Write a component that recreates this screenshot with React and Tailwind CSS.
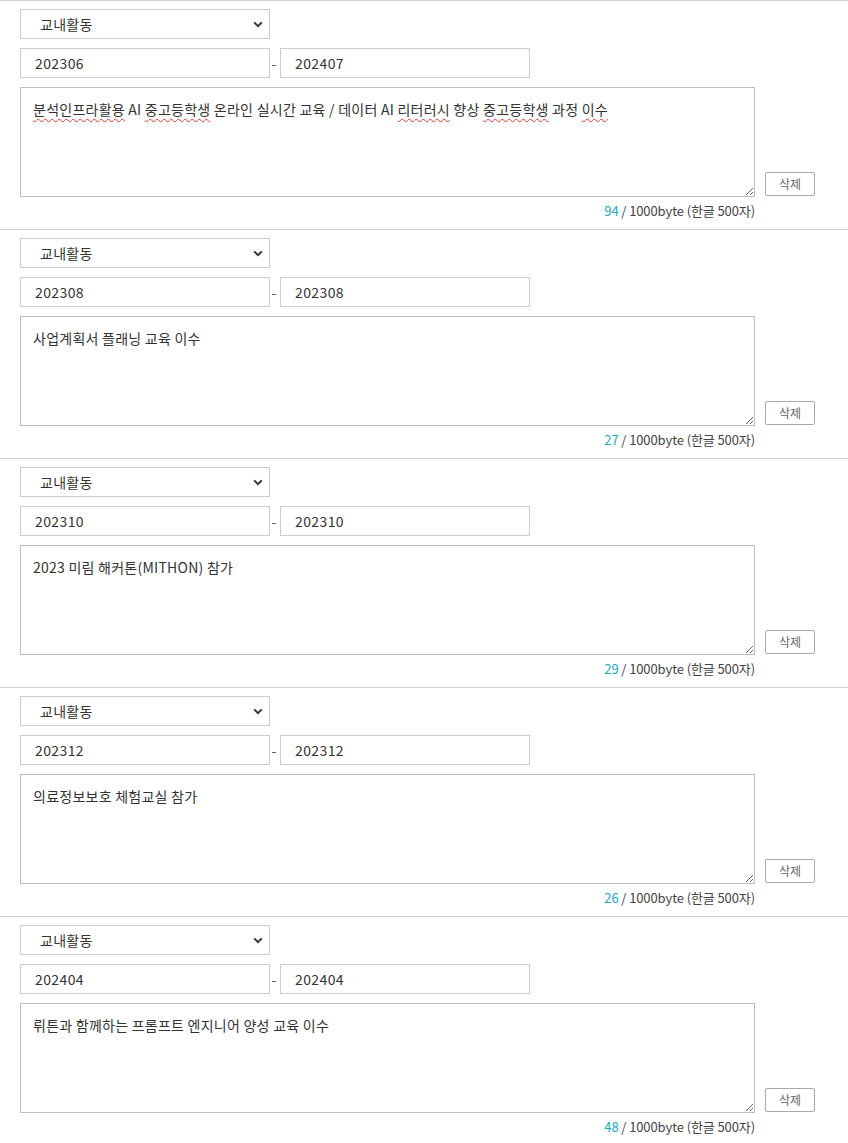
import React from 'react';

const font = { fontFamily: '"Noto Sans CJK KR", "Noto Sans", sans-serif' };

const items = [
  {
    from: '202306',
    to: '202407',
    bytes: 94,
    text: [
      { t: '분석인프라활용', s: true },
      { t: ' AI ' },
      { t: '중고등학생', s: true },
      { t: ' 온라인 실시간 교육 / 데이터 AI ' },
      { t: '리터러시', s: true },
      { t: ' 향상 ' },
      { t: '중고등학생', s: true },
      { t: ' 과정 ' },
      { t: '이수', s: true },
    ],
  },
  { from: '202308', to: '202308', bytes: 27, text: [{ t: '사업계획서 플래닝 교육 이수' }] },
  { from: '202310', to: '202310', bytes: 29, text: [{ t: '2023 미림 해커톤(MITHON) 참가' }] },
  { from: '202312', to: '202312', bytes: 26, text: [{ t: '의료정보보호 체험교실 참가' }] },
  { from: '202404', to: '202404', bytes: 48, text: [{ t: '뤼튼과 함께하는 프롬프트 엔지니어 양성 교육 이수' }] },
];

function Chevron() {
  return (
    <svg width="10" height="7" viewBox="0 0 10 7" className="shrink-0">
      <path d="M1.2 1.4 L5 5.2 L8.8 1.4" fill="none" stroke="#333" strokeWidth="2" />
    </svg>
  );
}

function ActivityRow({ item }) {
  return (
    <div className="border-t border-[#cfcfcf] pt-2 pl-5">
      <div className="w-[250px] h-[30px] border border-[#cccccc] bg-white flex items-center justify-between pl-[19px] pr-[6px] text-[14px] tracking-[0.3px] text-[#333]">
        <span className="leading-none">교내활동</span>
        <Chevron />
      </div>

      <div className="mt-[9px] flex items-center">
        <div className="w-[250px] h-[30px] border border-[#cccccc] flex items-center pl-[14px] text-[14px] tracking-[0.4px] text-[#333]">
          {item.from}
        </div>
        <div className="w-[10px] pr-[2px] text-center text-[14px] text-[#555] leading-none">-</div>
        <div className="w-[250px] h-[30px] border border-[#cccccc] flex items-center pl-[14px] text-[14px] tracking-[0.4px] text-[#333]">
          {item.to}
        </div>
      </div>

      <div className="mt-[9px] flex items-end gap-[10px]">
        <div className="w-[735px] h-[110px] border border-[#bdbdbd] bg-white px-3 pt-[11px] text-[14px] leading-[20px] tracking-[0.25px] text-[#333] resize overflow-auto">
          {item.text.map((p, i) =>
            p.s ? (
              <span key={i} className="underline decoration-wavy decoration-[#e53935] underline-offset-[3px] decoration-[1px]">
                {p.t}
              </span>
            ) : (
              <span key={i}>{p.t}</span>
            )
          )}
        </div>
        <button className="w-[50px] h-[24px] mb-[1px] border border-[#aaaaaa] rounded-[2px] bg-white text-[12px] text-[#666] flex items-center justify-center">
          삭제
        </button>
      </div>

      <div className="w-[735px] h-[32px] pt-[5px] text-right text-[13px] leading-[18px] tracking-[-0.1px] text-[#444]">
        <span className="text-[#1ea7c5]">{item.bytes}</span> / 1000byte (한글 500자)
      </div>
    </div>
  );
}

export default function App() {
  return (
    <div className="w-[848px] bg-white" style={font}>
      {items.map((item, i) => (
        <ActivityRow key={i} item={item} />
      ))}
    </div>
  );
}
